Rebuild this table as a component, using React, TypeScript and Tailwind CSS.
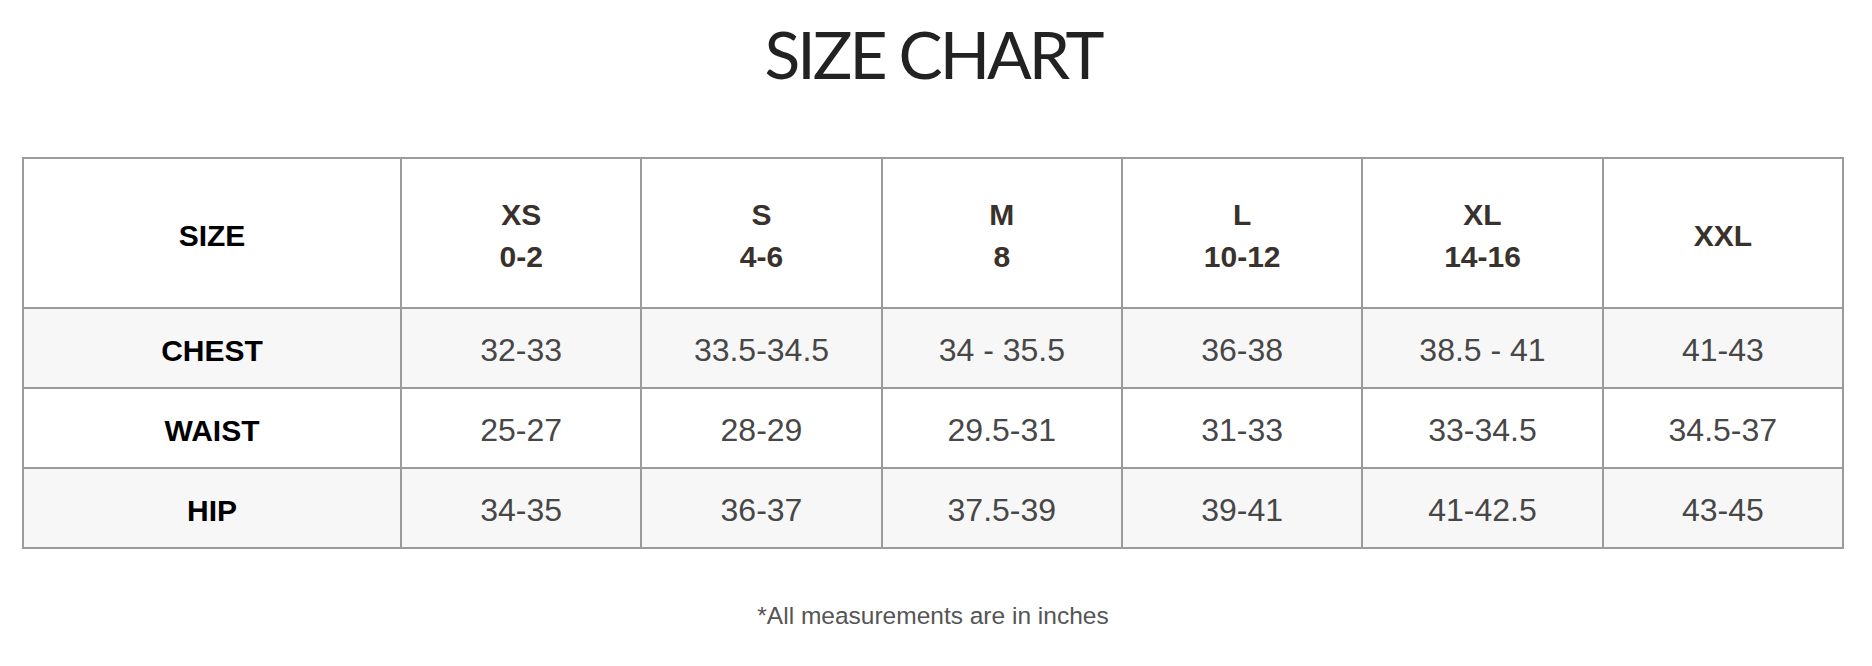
const sizes = [
  { label: "XS", range: "0-2" },
  { label: "S", range: "4-6" },
  { label: "M", range: "8" },
  { label: "L", range: "10-12" },
  { label: "XL", range: "14-16" },
  { label: "XXL", range: "" },
];

const rows = [
  { name: "CHEST", values: ["32-33", "33.5-34.5", "34 - 35.5", "36-38", "38.5 - 41", "41-43"] },
  { name: "WAIST", values: ["25-27", "28-29", "29.5-31", "31-33", "33-34.5", "34.5-37"] },
  { name: "HIP", values: ["34-35", "36-37", "37.5-39", "39-41", "41-42.5", "43-45"] },
];

export default function App() {
  return (
    <div className="w-[1872px] h-[666px] bg-white font-['Liberation_Sans',Arial,sans-serif]">
      <h1 className="pt-[21px] ml-[22px] w-[1822px] text-center font-['Lato',sans-serif] font-normal text-[66px] leading-none tracking-[-3px] text-[#222222]">
        SIZE CHART
      </h1>

      <div className="mt-[70px] ml-[22px] w-[1822px] grid grid-cols-[378px_repeat(6,minmax(0,1fr))] border-l-2 border-t-2 border-[#9b9b9b]">
        {/* header row */}
        <div className="h-[150px] pt-[5px] flex items-center justify-center border-r-2 border-b-2 border-[#9b9b9b] bg-white text-[30px] font-bold text-black">
          SIZE
        </div>
        {sizes.map((s) => (
          <div
            key={s.label}
            className="h-[150px] pt-[5px] flex flex-col items-center justify-center border-r-2 border-b-2 border-[#9b9b9b] bg-white text-[30px] leading-[42px] font-bold text-[#38312c]"
          >
            <span>{s.label}</span>
            {s.range && <span>{s.range}</span>}
          </div>
        ))}

        {rows.map((r, i) => {
          const bg = i % 2 === 0 ? "bg-[#f7f7f7]" : "bg-white";
          return (
            <div key={r.name} className="contents">
              <div
                className={`h-[80px] pt-[4px] flex items-center justify-center border-r-2 border-b-2 border-[#9b9b9b] ${bg} text-[30px] font-bold text-black`}
              >
                {r.name}
              </div>
              {r.values.map((v, j) => (
                <div
                  key={j}
                  className={`h-[80px] pt-[4px] flex items-center justify-center border-r-2 border-b-2 border-[#9b9b9b] ${bg} text-[32px] text-[#474747]`}
                >
                  {v}
                </div>
              ))}
            </div>
          );
        })}
      </div>

      <p className="mt-[55px] ml-[22px] w-[1822px] text-center text-[24.5px] leading-[24px] text-[#555555]">
        *All measurements are in inches
      </p>
    </div>
  );
}
